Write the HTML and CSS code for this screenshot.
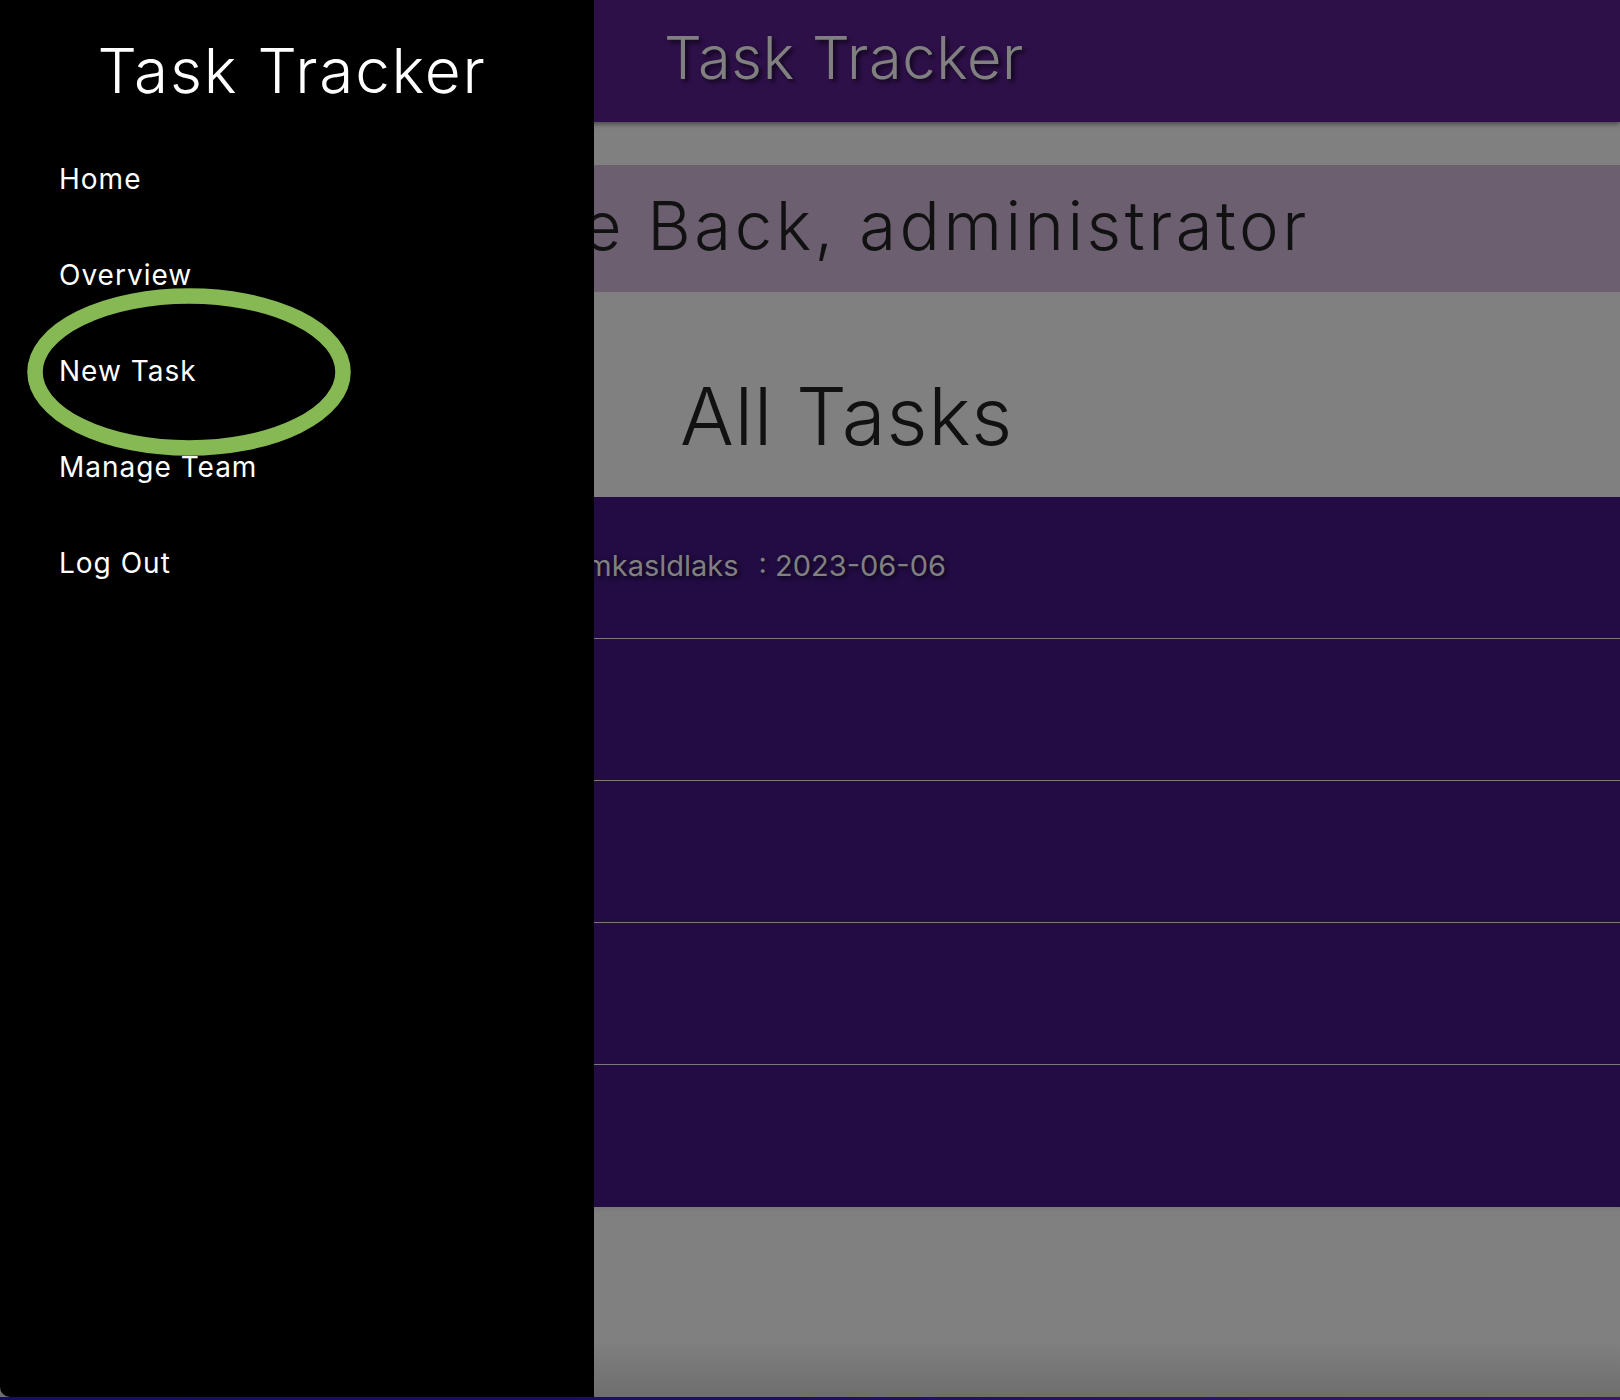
FILE: index.html
```html
<!DOCTYPE html>
<html lang="en">
<head>
<meta charset="utf-8">
<title>Task Tracker</title>
<link rel="stylesheet" href="styles.css">
</head>
<body>
<div class="page">
  <header class="topbar">
    <h1 class="brand">Task Tracker</h1>
  </header>
  <section class="welcome">
    <h2 class="welcome-text">Welcome Back, administrator</h2>
  </section>
  <section class="tasks-head">
    <h2 class="tasks-title">All Tasks</h2>
  </section>
  <ul class="task-list">
    <li class="task-row"><span class="task-name">asdlmkasldlaks</span><span class="task-date">: 2023-06-06</span></li>
    <li class="task-row"></li>
    <li class="task-row"></li>
    <li class="task-row"></li>
    <li class="task-row"></li>
  </ul>
  <div class="page-foot"></div>
</div>

<aside class="drawer">
  <h2 class="drawer-title">Task Tracker</h2>
  <nav class="drawer-nav">
    <a class="drawer-link" href="#">Home</a>
    <a class="drawer-link" href="#">Overview</a>
    <a class="drawer-link" href="#">New Task</a>
    <a class="drawer-link" href="#">Manage Team</a>
    <a class="drawer-link" href="#">Log Out</a>
  </nav>
  <svg class="highlight" width="340" height="180" viewBox="0 0 340 180" aria-hidden="true">
    <ellipse cx="170" cy="90" rx="154" ry="76" fill="none" stroke="#86b853" stroke-width="15.5"/>
  </svg>
</aside>
</body>
</html>
```

FILE: styles.css
```css
* { box-sizing: border-box; }

html, body {
  margin: 0;
  padding: 0;
}

body {
  width: 1620px;
  height: 1400px;
  overflow: hidden;
  font-family: "Inter", "Noto Sans", sans-serif;
  background: linear-gradient(90deg, #17105a 0%, #1d0f5c 45%, #3a166f 100%);
}

.page {
  height: 1397px;
  background: #808080;
  display: flex;
  flex-direction: column;
}

.topbar {
  height: 122px;
  flex: none;
  background: #2e1049;
  box-shadow: 0 2px 5px rgba(0, 0, 0, 0.45);
  padding-left: 664px;
  position: relative;
  z-index: 1;
}

.brand {
  margin: 0;
  font-weight: 300;
  font-size: 59.5px;
  line-height: 114px;
  letter-spacing: 0.6px;
  color: #808080;
  text-shadow: 3px 3px 4px rgba(0, 0, 0, 0.65);
}

.welcome {
  margin-top: 43px;
  height: 127px;
  flex: none;
  background: #6b5f70;
}

.welcome-text {
  margin: 0;
  font-weight: 300;
  font-size: 67px;
  line-height: 121px;
  letter-spacing: 3.5px;
  color: #121112;
  text-align: center;
  white-space: nowrap;
}

.tasks-head {
  height: 205px;
  flex: none;
  padding: 84px 0 0 680px;
}

.tasks-title {
  margin: 0;
  font-weight: 300;
  font-size: 80px;
  line-height: 80px;
  letter-spacing: 0.6px;
  color: #111111;
}

.task-list {
  list-style: none;
  margin: 0;
  padding: 0;
  flex: none;
  background: #220c43;
}

.task-row {
  height: 142px;
  border-bottom: 1px solid #7a7a7a;
  padding-left: 530px;
  font-size: 29px;
  line-height: 137px;
  color: #808080;
  text-shadow: 2px 2px 4px rgba(0, 0, 0, 0.7);
  white-space: nowrap;
}

.task-row:last-child {
  border-bottom: none;
}

.task-name {
  margin-right: 20px;
}

.page-foot {
  flex: 1;
  background: linear-gradient(180deg, #7a7a7a 0px, #808080 6px, #808080 70%, #6e6e6e 100%);
}

.drawer {
  position: fixed;
  left: 0;
  top: 0;
  z-index: 10;
  width: 594px;
  height: 1397px;
  background: #000000;
  border-bottom-left-radius: 10px;
  color: #ffffff;
}

.drawer-title {
  margin: 0 10px 0 0;
  padding-top: 40px;
  font-weight: 300;
  font-size: 62px;
  line-height: 62px;
  letter-spacing: 1.8px;
  text-align: center;
}

.drawer-nav {
  display: flex;
  flex-direction: column;
  margin-top: 29px;
  padding-left: 59px;
}

.drawer-link {
  display: block;
  height: 96px;
  font-size: 28px;
  line-height: 96px;
  letter-spacing: 1px;
  color: #ffffff;
  text-decoration: none;
}

.highlight {
  position: absolute;
  left: 19px;
  top: 282px;
}
```
